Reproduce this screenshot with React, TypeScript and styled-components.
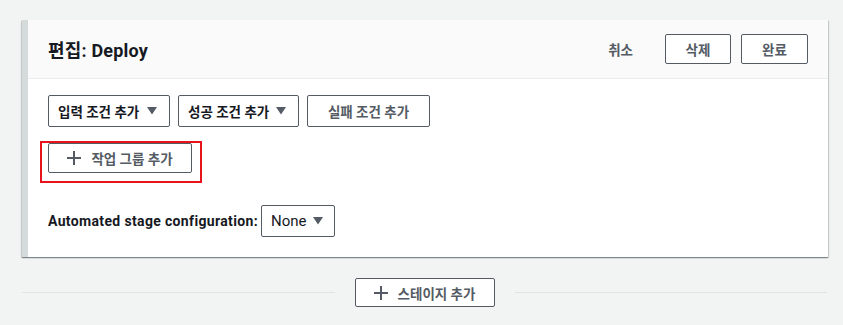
import React, { FC } from "react";
import styled, { createGlobalStyle } from "styled-components";

const GlobalStyle = createGlobalStyle`
    body {
        margin: 0;
        background: #f2f3f3;
        font-family: Roboto, "Noto Sans CJK KR", sans-serif;
        color: #16191f;
    }
`;

const Page = styled.div`
    width: 843px;
    height: 325px;
    box-sizing: border-box;
    padding: 20px 15px 0 22px;
`;

const Card = styled.div`
    background: #ffffff;
    border-left: 6px solid #d5dbdb;
    box-shadow: 0 1px 1px 0 rgba(0, 28, 36, 0.3),
        1px 1px 1px 0 rgba(0, 28, 36, 0.15),
        -1px 1px 1px 0 rgba(0, 28, 36, 0.15);
`;

const CardHeader = styled.div`
    display: flex;
    align-items: center;
    justify-content: space-between;
    height: 59px;
    box-sizing: border-box;
    padding: 0 20px;
    background: #fafafa;
    border-bottom: 1px solid #eaeded;
`;

const Title = styled.h2`
    margin: 0;
    font-size: 18px;
    font-weight: 700;
    color: #16191f;
    letter-spacing: 0.2px;
`;

const Actions = styled.div`
    display: flex;
    align-items: center;
    gap: 10px;
`;

const LinkButton = styled.button`
    border: none;
    background: none;
    font-family: inherit;
    font-size: 13.5px;
    font-weight: 700;
    color: #545b64;
    padding: 4px 20px;
    margin-right: 2px;
    cursor: pointer;
`;

const Button = styled.button<{ w: number; h?: number; dark?: boolean }>`
    display: inline-flex;
    align-items: center;
    justify-content: center;
    gap: 10px;
    width: ${(p) => p.w}px;
    height: ${(p) => p.h ?? 30}px;
    box-sizing: border-box;
    padding: 0;
    border: 1px solid #545b64;
    border-radius: 2px;
    background: #ffffff;
    font-family: inherit;
    font-size: 13.5px;
    font-weight: 700;
    white-space: nowrap;
    color: ${(p) => (p.dark ? "#16191f" : "#545b64")};
    cursor: pointer;
`;

const DropButton = styled(Button)`
    justify-content: space-between;
    gap: 0;
    padding: 0 12px 0 9px;
`;

const CardBody = styled.div`
    display: flex;
    flex-direction: column;
    align-items: flex-start;
    padding: 16px 20px 20px;
`;

const Row = styled.div<{ mt?: number }>`
    display: flex;
    align-items: center;
    gap: 8px;
    margin-top: ${(p) => p.mt ?? 0}px;
`;

const Highlight = styled.div`
    position: relative;
`;

const RedBox = styled.div`
    position: absolute;
    left: -8px;
    top: -2px;
    width: 162px;
    height: 42px;
    box-sizing: border-box;
    border: 2.5px solid #e8141c;
    pointer-events: none;
`;

const Label = styled.span`
    font-size: 14px;
    font-weight: 700;
    color: #16191f;
    letter-spacing: 0.35px;
    margin-right: -5px;
`;

const Select = styled.div`
    display: flex;
    align-items: center;
    justify-content: space-between;
    width: 74px;
    height: 32px;
    box-sizing: border-box;
    padding: 0 11px 0 9px;
    border: 1px solid #545b64;
    border-radius: 2px;
    font-size: 15px;
    color: #16191f;
`;

const Footer = styled.div`
    display: flex;
    align-items: center;
    gap: 20px;
    margin-top: 21px;
    padding-right: 1px;
`;

const Rule = styled.div`
    flex: 1;
    height: 1px;
    background: #e1e4e4;
`;

const Caret: FC = () => (
    <svg width="10" height="8" viewBox="0 0 10 8">
        <path d="M0 0 H10 L5 7.5 Z" fill="#545b64" />
    </svg>
);

const Plus: FC = () => (
    <svg width="14" height="14" viewBox="0 0 14 14">
        <path d="M7 0 V14 M0 7 H14" stroke="#545b64" strokeWidth="2" />
    </svg>
);

const App: FC = () => {
    return (
        <>
            <GlobalStyle />
            <Page>
                <Card>
                    <CardHeader>
                        <Title>편집: Deploy</Title>
                        <Actions>
                            <LinkButton>취소</LinkButton>
                            <Button w={66}>삭제</Button>
                            <Button w={67}>완료</Button>
                        </Actions>
                    </CardHeader>
                    <CardBody>
                        <Row>
                            <DropButton w={122} h={32} dark>
                                입력 조건 추가 <Caret />
                            </DropButton>
                            <DropButton w={121} h={32} dark>
                                성공 조건 추가 <Caret />
                            </DropButton>
                            <Button w={123} h={32}>
                                실패 조건 추가
                            </Button>
                        </Row>
                        <Row mt={16}>
                            <Highlight>
                                <Button w={144} h={30}>
                                    <Plus />
                                    작업 그룹 추가
                                </Button>
                                <RedBox />
                            </Highlight>
                        </Row>
                        <Row mt={32}>
                            <Label>Automated stage configuration:</Label>
                            <Select>
                                None <Caret />
                            </Select>
                        </Row>
                    </CardBody>
                </Card>
                <Footer>
                    <Rule />
                    <Button w={140} h={29}>
                        <Plus />
                        스테이지 추가
                    </Button>
                    <Rule />
                </Footer>
            </Page>
        </>
    );
};

export default App;
